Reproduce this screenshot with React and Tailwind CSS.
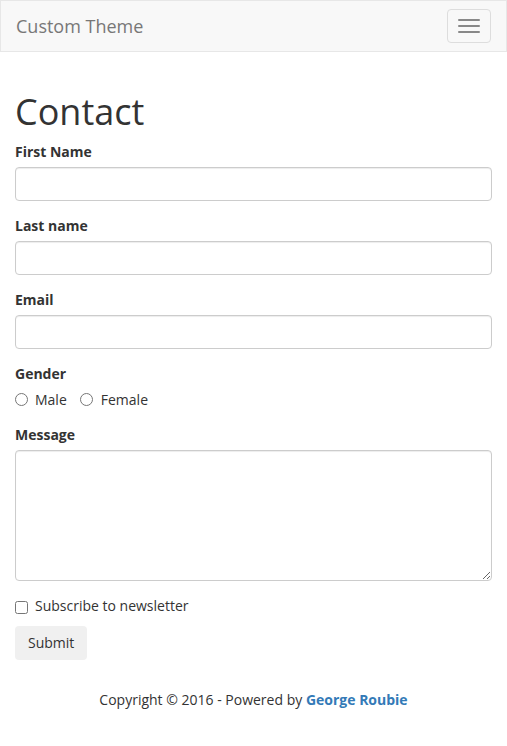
export default function App() {
  const input =
    'block h-[34px] w-full rounded-[4px] border border-[#ccc] bg-white px-3 py-1.5 text-[14px] text-[#555] shadow-[inset_0_1px_1px_rgba(0,0,0,0.075)] outline-none'

  return (
    <div
      className="min-h-[746px] bg-white text-[14px] leading-[20px] text-[#333]"
      style={{ fontFamily: '"Open Sans", "Liberation Sans", sans-serif' }}
    >
      {/* Navbar */}
      <nav className="flex h-[52px] items-start justify-between border border-[#e7e7e7] bg-[#f8f8f8]">
        <a className="px-[15px] py-[15px] text-[18px] leading-[20px] text-[#777]">Custom Theme</a>
        <button
          type="button"
          className="mr-[15px] mt-2 flex h-[34px] w-[44px] flex-col items-center justify-center gap-1 rounded-[4px] border border-[#ddd]"
        >
          <span className="block h-[2px] w-[22px] rounded-[1px] bg-[#888]" />
          <span className="block h-[2px] w-[22px] rounded-[1px] bg-[#888]" />
          <span className="block h-[2px] w-[22px] rounded-[1px] bg-[#888]" />
        </button>
      </nav>

      <div className="px-[15px] pt-10">
        <h1 className="mb-2.5 text-[36px] leading-[39.6px] font-normal">Contact</h1>

        <form>
          <div className="mb-[15px]">
            <label className="mb-[5px] block font-bold">First Name</label>
            <input type="text" className={input} />
          </div>
          <div className="mb-[15px]">
            <label className="mb-[5px] block font-bold">Last name</label>
            <input type="text" className={input} />
          </div>
          <div className="mb-[15px]">
            <label className="mb-[5px] block font-bold">Email</label>
            <input type="email" className={input} />
          </div>
          <div className="mb-[15px]">
            <label className="mb-[5px] block font-bold">Gender</label>
            <div className="flex items-center pt-px">
              <label className="flex items-center">
                <input type="radio" name="gender" className="m-0 h-[13px] w-[13px]" />
                <span className="ml-[7px]">Male</span>
              </label>
              <label className="ml-[13px] flex items-center">
                <input type="radio" name="gender" className="m-0 h-[13px] w-[13px]" />
                <span className="ml-[8px]">Female</span>
              </label>
            </div>
          </div>
          <div className="mb-[15px]">
            <label className="mb-[5px] block font-bold">Message</label>
            <textarea className="block h-[131px] w-full rounded-[4px] border border-[#ccc] bg-white px-3 py-1.5 text-[14px] text-[#555] shadow-[inset_0_1px_1px_rgba(0,0,0,0.075)] outline-none" />
          </div>
          <div className="mb-2.5">
            <label className="flex items-center">
              <input type="checkbox" className="m-0 h-[13px] w-[13px] translate-y-[2px]" />
              <span className="ml-[7px]">Subscribe to newsletter</span>
            </label>
          </div>
          <button
            type="button"
            className="h-[34px] rounded-[4px] bg-[#f0f0f0] px-[13px] text-[14px] text-[#333]"
          >
            Submit
          </button>
        </form>

        <footer className="pb-5 pt-[30px] text-center">
          Copyright © 2016 - Powered by{' '}
          <a className="font-bold text-[#337ab7]">George Roubie</a>
        </footer>
      </div>
    </div>
  )
}
